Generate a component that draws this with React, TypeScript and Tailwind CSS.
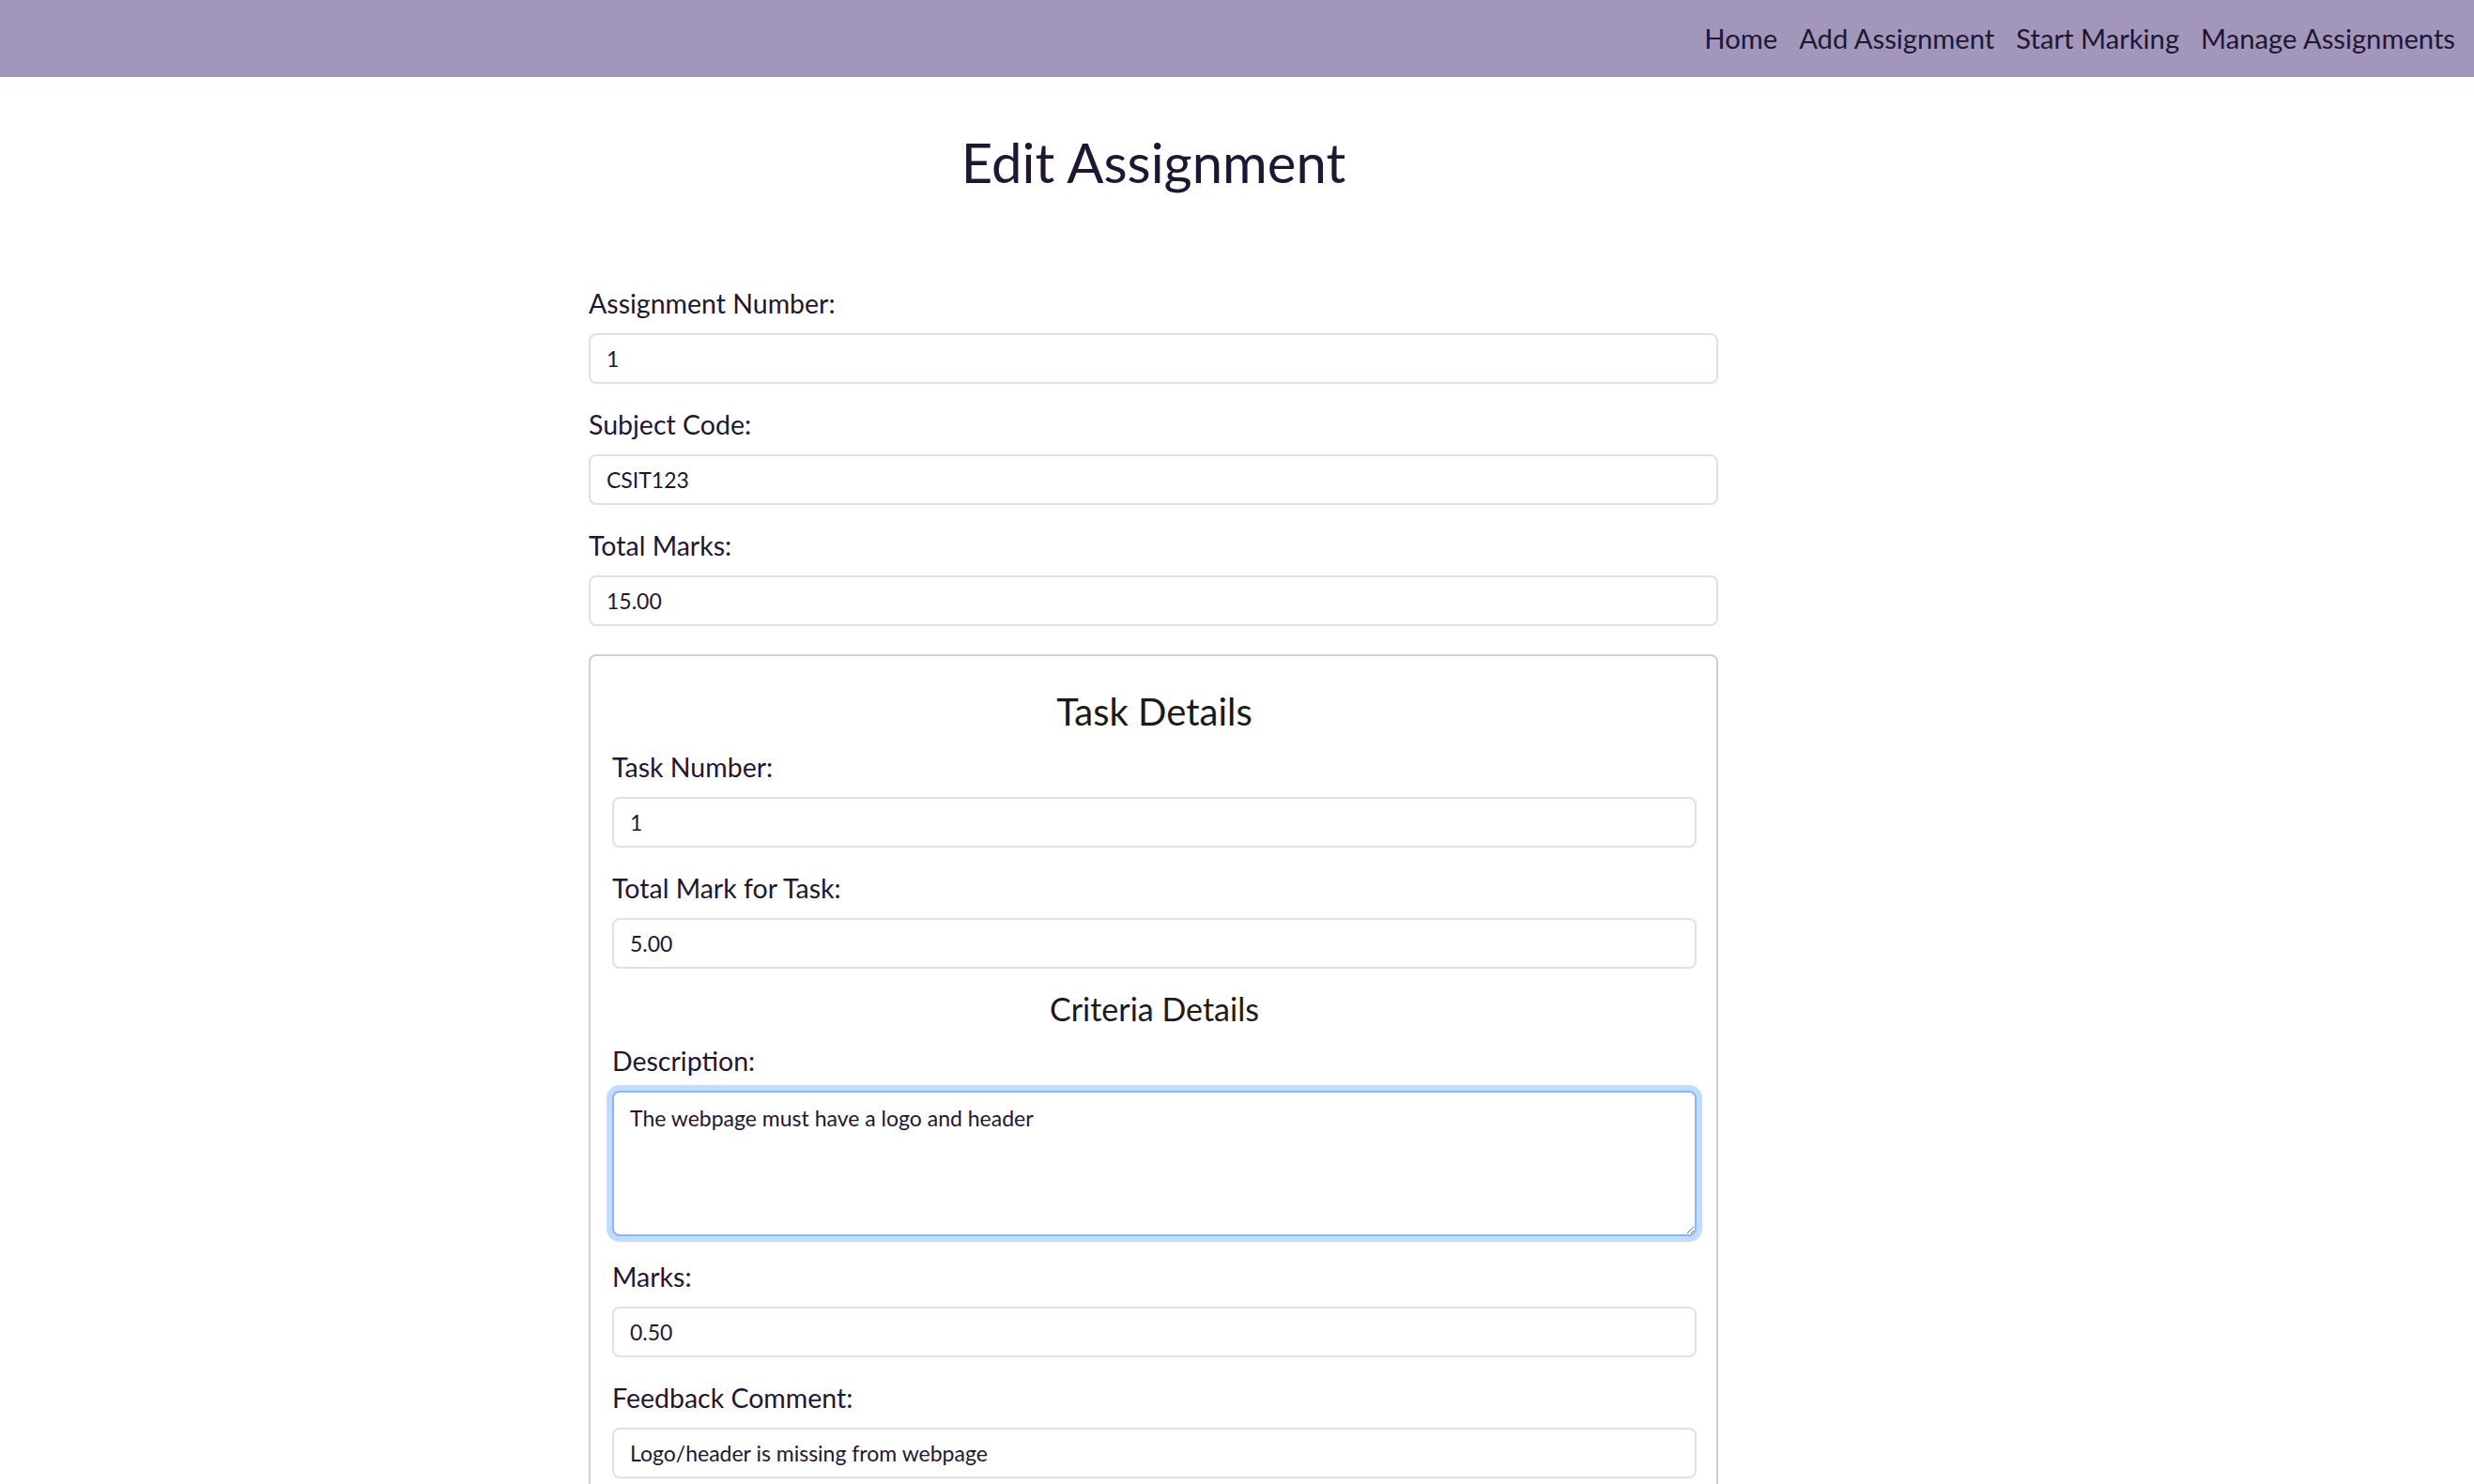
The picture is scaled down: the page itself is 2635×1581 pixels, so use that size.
import { useEffect, useRef } from "react";

const font = { fontFamily: "Lato, 'Open Sans', sans-serif" };

function Field({ label, value, last }: { label: string; value: string; last?: boolean }) {
  return (
    <div className={last ? "mb-[30px]" : "mb-[23px]"}>
      <label className="mb-[12px] block text-[28.5px] leading-[40px] text-[#1f1633]">{label}</label>
      <input
        defaultValue={value}
        className="block h-[54px] w-full rounded-[8px] border-2 border-[#dee2e6] bg-white px-[17px] text-[23px] text-[#1f1633] outline-none"
      />
    </div>
  );
}

export default function App() {
  const descRef = useRef<HTMLTextAreaElement>(null);

  useEffect(() => {
    const el = descRef.current;
    if (el) {
      el.focus();
      el.setSelectionRange(el.value.length, el.value.length);
    }
  }, []);

  return (
    <div className="min-h-screen bg-white" style={font}>
      <nav className="flex h-[82px] items-center justify-end bg-[#a297bb] pr-[20px]">
        <ul className="flex gap-[23px] text-[29.2px] text-[#1f1633]">
          <li>Home</li>
          <li>Add Assignment</li>
          <li>Start Marking</li>
          <li>Manage Assignments</li>
        </ul>
      </nav>

      <div className="ml-[627px] w-[1203px]">
        <h1 className="mt-[55px] mb-[94px] text-center text-[58px] leading-[72px] text-[#1f1633]">Edit Assignment</h1>

        <Field label="Assignment Number:" value="1" />
        <Field label="Subject Code:" value="CSIT123" />
        <Field label="Total Marks:" value="15.00" last />

        <div className="rounded-[8px] border-2 border-[#d0d0d0] pt-[35px] pr-[21px] pb-[40px] pl-[23px]">
          <h2 className="mb-[15px] text-center text-[40px] leading-[48px] text-[#1a1a1a]">Task Details</h2>
          <Field label="Task Number:" value="1" />
          <Field label="Total Mark for Task:" value="5.00" />

          <h3 className="mb-[15px] text-center text-[34px] leading-[40px] text-[#1a1a1a]">Criteria Details</h3>
          <div className="mb-[23px]">
            <label className="mb-[12px] block text-[28.5px] leading-[40px] text-[#1f1633]">Description:</label>
            <textarea
              ref={descRef}
              defaultValue="The webpage must have a logo and header"
              className="block h-[155px] w-full rounded-[8px] border-2 border-[#86b7fe] bg-white px-[17px] py-[10px] text-[23px] text-[#1f1633] caret-[#1f1633] shadow-[0_0_0_6px_rgba(13,110,253,0.25)] outline-none"
            />
          </div>
          <Field label="Marks:" value="0.50" />
          <Field label="Feedback Comment:" value="Logo/header is missing from webpage" />
        </div>
      </div>
    </div>
  );
}
